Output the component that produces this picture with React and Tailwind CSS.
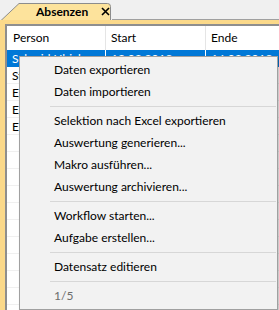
import React from 'react';

const rows = [
  { person: 'Schmid Ulrich', start: '12.03.2018', ende: '16.03.2018' },
  { person: 'Steiner Anna', start: '19.03.2018', ende: '23.03.2018' },
  { person: 'Egli Thomas', start: '26.03.2018', ende: '30.03.2018' },
  { person: 'Egger Martin', start: '03.04.2018', ende: '06.04.2018' },
  { person: 'Erni Sandra', start: '09.04.2018', ende: '13.04.2018' },
];

const menu = [
  'Daten exportieren',
  'Daten importieren',
  '-',
  'Selektion nach Excel exportieren',
  'Auswertung generieren...',
  'Makro ausführen...',
  'Auswertung archivieren...',
  '-',
  'Workflow starten...',
  'Aufgabe erstellen...',
  '-',
  'Datensatz editieren',
  '-',
];

const font = "font-['Lato','Liberation_Sans',sans-serif]";

function TabShape() {
  return (
    <svg className="absolute inset-0" width="112" height="20" viewBox="0 0 112 20">
      <path
        d="M1 20.5 L19 3.5 H107.5 Q110.5 3.5 110.5 6.5 V20.5"
        fill="#fde39c"
        stroke="#8c8c8c"
        strokeWidth="1"
      />
    </svg>
  );
}

export default function App() {
  const empty = Array.from({ length: 11 });

  return (
    <div className={`relative w-[279px] h-[310px] overflow-hidden bg-[#f0f0f0] text-[12px] text-black ${font}`}>
      {/* tab strip */}
      <div className="flex h-[20px]">
        <div className="relative w-[112px] h-[20px] shrink-0">
          <TabShape />
          <div className="relative flex items-center h-full pt-[3px] pl-[36px]">
            <span className="font-bold leading-none">Absenzen</span>
            <svg className="ml-[13px]" width="9" height="9" viewBox="0 0 9 9">
              <path d="M1 1 L8 8 M8 1 L1 8" stroke="#000" strokeWidth="1.6" />
            </svg>
          </div>
        </div>
        <div className="flex-1 border-b border-[#a0a0a0]" />
      </div>

      {/* frame */}
      <div className="h-[290px] bg-[#fbd98a] pl-[5px] pt-[4px]">
        <div className="h-full bg-white border-l-2 border-t-2 border-[#8e8e8e]">
          <div className="grid grid-cols-[99px_100px_1fr] h-[24px] items-center">
            <div className="pl-[6px] border-r border-[#e5e5e5] h-full flex items-center">Person</div>
            <div className="pl-[5px] border-r border-[#e5e5e5] h-full flex items-center">Start</div>
            <div className="pl-[5px] h-full flex items-center">Ende</div>
          </div>
          {rows.map((r, i) => (
            <div
              key={r.person}
              className={`grid grid-cols-[99px_100px_1fr] h-[17px] items-center ${
                i === 0 ? 'bg-[#0078d7] text-white' : 'border-b border-[#f0f0f0]'
              }`}
            >
              <div className={`pl-[5px] h-full flex items-center ${i === 0 ? 'border-r border-white' : ''}`}>{r.person}</div>
              <div className={`pl-[5px] h-full flex items-center ${i === 0 ? 'border-r border-white' : ''}`}>{r.start}</div>
              <div className="pl-[5px] h-full flex items-center">{r.ende}</div>
            </div>
          ))}
          {empty.map((_, i) => (
            <div key={i} className="h-[17px] border-b border-[#f0f0f0]" />
          ))}
        </div>
      </div>

      {/* context menu */}
      <div className="absolute left-[19px] top-[56px] w-[259px] h-[254px] bg-[#f2f2f2] border border-[#a0a0a0] shadow-[2px_2px_3px_rgba(0,0,0,0.25)] pt-[2px]">
        {menu.map((item, i) =>
          item === '-' ? (
            <div key={i} className="py-[3px] pl-[30px] pr-[1px]">
              <div className="h-px bg-[#d7d7d7]" />
            </div>
          ) : (
            <div key={i} className="h-[22px] flex items-center pl-[34px]">
              {item}
            </div>
          )
        )}
        <div className="h-[22px] flex items-center pl-[34px] text-[#6d6d6d]">1/5</div>
      </div>
    </div>
  );
}
